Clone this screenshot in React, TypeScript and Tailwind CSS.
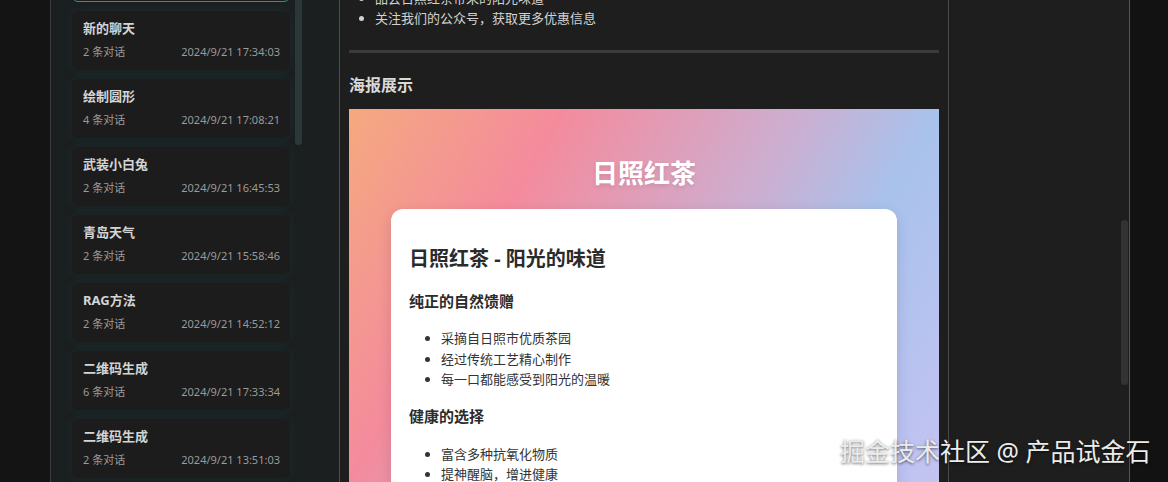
import React from 'react';

const chats = [
  { title: '新的聊天', count: 2, time: '2024/9/21 17:34:03' },
  { title: '绘制圆形', count: 4, time: '2024/9/21 17:08:21' },
  { title: '武装小白兔', count: 2, time: '2024/9/21 16:45:53' },
  { title: '青岛天气', count: 2, time: '2024/9/21 15:58:46' },
  { title: 'RAG方法', count: 2, time: '2024/9/21 14:52:12' },
  { title: '二维码生成', count: 6, time: '2024/9/21 17:33:34' },
  { title: '二维码生成', count: 2, time: '2024/9/21 13:51:03' },
];

const ChatCard = ({ title, count, time }: { title: string; count: number; time: string }) => (
  <div className="h-[59px] shrink-0 rounded-md bg-[#1c1c1d] pl-[11px] pr-[10px] pt-[8px] shadow-[0_0_12px_rgba(50,130,140,0.12)]">
    <div className="text-[13px] leading-[18px] font-bold text-[#d4d4d4]">{title}</div>
    <div className="mt-[7px] flex justify-between text-[11px] leading-[16px] text-[#9a9a9a]">
      <span>{count} 条对话</span>
      <span>{time}</span>
    </div>
  </div>
);

export default function App() {
  return (
    <div
      className="relative flex h-[482px] w-[1168px] overflow-hidden bg-[#121212]"
      style={{ fontFamily: '"Noto Sans", "Noto Sans CJK SC", sans-serif' }}
    >
      {/* outer left strip */}
      <div className="w-[51px] shrink-0 border-r border-[#3c3c3c] bg-[#141414]" />

      {/* chat history */}
      <div className="flex w-[289px] shrink-0 border-r border-[#4d4d4d] bg-[#1b1f20] pl-[21px]">
        <div className="mt-[-57px] flex w-[218px] flex-col gap-[9px]">
          {/* selected chat, scrolled out of view */}
          <div className="h-[59px] shrink-0 rounded-md border border-[#2f8ea4] bg-[#1c1c1d]" />
          {chats.map((c, i) => (
            <ChatCard key={i} {...c} />
          ))}
        </div>
        <div className="ml-[5px] h-[145px] w-[7px] rounded-b-full bg-[#2c3739]" />
      </div>

      {/* main content */}
      <div className="flex w-[609px] shrink-0 flex-col border-r border-[#4a4a4a] bg-[#1e1e1e] px-[9px]">
        <ul className="mt-[-12px] list-disc pl-[26px] text-[13px] leading-[20px] text-[#d2d2d2]">
          <li>品尝日照红茶带来的阳光味道</li>
          <li>关注我们的公众号，获取更多优惠信息</li>
        </ul>
        <div className="mt-[22px] h-[3px] shrink-0 bg-[#3b3b3b]" />
        <h2 className="mt-[20px] text-[16px] leading-[24px] font-bold text-[#d9d9d9]">海报展示</h2>

        <div className="mt-[12px] h-[600px] shrink-0 bg-[linear-gradient(120deg,#f5a97f_0%,#f48b9d_23%,#cdaed0_48%,#a8c2ec_63%,#c3c3f2_85%,#d0c4f0_100%)] pt-[46px]">
          <div className="text-center text-[26px] leading-[36px] font-bold text-white [text-shadow:0_2px_4px_rgba(0,0,0,0.1)]">
            日照红茶
          </div>
          <div className="mx-[42px] mt-[18px] h-[500px] rounded-xl bg-white pl-[18px] pr-[18px] pt-[36px] text-[#2b2b2b] shadow-[0_4px_14px_rgba(0,0,0,0.12)]">
            <h3 className="text-[20px] leading-[28px] font-bold">日照红茶 - 阳光的味道</h3>
            <h4 className="mt-[17px] text-[15px] leading-[22px] font-bold">纯正的自然馈赠</h4>
            <ul className="mt-[16px] list-disc pl-[32px] text-[13px] leading-[20.5px] text-[#333]">
              <li>采摘自日照市优质茶园</li>
              <li>经过传统工艺精心制作</li>
              <li>每一口都能感受到阳光的温暖</li>
            </ul>
            <h4 className="mt-[15px] text-[15px] leading-[22px] font-bold">健康的选择</h4>
            <ul className="mt-[17px] list-disc pl-[32px] text-[13px] leading-[20.5px] text-[#333]">
              <li>富含多种抗氧化物质</li>
              <li>提神醒脑，增进健康</li>
            </ul>
          </div>
        </div>
      </div>

      {/* right panel */}
      <div className="flex w-[181px] shrink-0 justify-end border-r border-[#555] bg-[#1e1e1e] pr-[1px]">
        <div className="mt-[220px] h-[165px] w-[7px] rounded-full bg-[#333333]" />
      </div>

      <div className="flex-1 bg-[#121212]" />

      {/* watermark */}
      <div className="absolute left-[840px] top-[435px] text-[25px] leading-[32px] whitespace-nowrap text-[#ececec] [text-shadow:0_1px_3px_rgba(0,0,0,0.6)]">
        掘金技术社区 @ 产品试金石
      </div>
    </div>
  );
}
